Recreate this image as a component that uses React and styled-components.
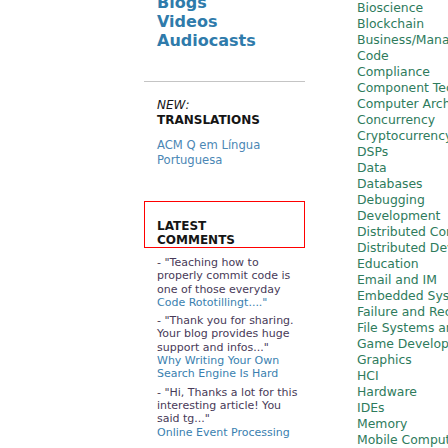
import React from 'react';
import styled, { createGlobalStyle } from 'styled-components';

const GlobalStyle = createGlobalStyle`
  body {
    margin: 0;
    background: #fff;
    font-family: "DejaVu Sans", Verdana, sans-serif;
    overflow: hidden;
  }
`;

const Page = styled.div`
  display: grid;
  grid-template-columns: 144px 161px 1fr;
  width: 448px;
  height: 448px;
  overflow: hidden;
`;

const Sidebar = styled.div`
  grid-column: 2;
  display: flex;
  flex-direction: column;
  white-space: nowrap;
`;

const NavList = styled.div`
  margin-top: -7px;
  padding-left: 13px;
  display: flex;
  flex-direction: column;
`;

const NavLink = styled.a`
  font-size: 16px;
  line-height: 19px;
  font-weight: bold;
  color: #2f7bab;
  text-decoration: none;
`;

const Rule = styled.div`
  margin-top: 31px;
  border-top: 1px solid #c4c4c4;
`;

const Block = styled.div`
  padding-left: 13px;
  margin-top: 16px;
`;

const Heading = styled.div`
  font-size: 12px;
  line-height: ${(p) => p.$lh || 15}px;
  font-weight: bold;
  color: #151515;
  em {
    font-weight: normal;
    font-style: italic;
  }
`;

const PlainLink = styled.a`
  display: block;
  margin-top: 10px;
  font-size: 11.6px;
  line-height: 15px;
  color: #4b87b5;
  text-decoration: none;
`;

const Highlight = styled.div`
  margin-top: 33px;
  border: 1px solid #ff0000;
  padding: 17px 0 0 12px;
`;

const Comments = styled.div`
  margin-top: 8px;
  padding-left: 13px;
  display: flex;
  flex-direction: column;
  gap: 5px;
`;

const Comment = styled.div`
  font-size: 11px;
  line-height: 13.3px;
  color: #483a58;
`;

const CommentLink = styled.a`
  display: block;
  color: #3a7fb0;
  text-decoration: none;
`;

const Topics = styled.div`
  grid-column: 3;
  padding-left: 52px;
  display: flex;
  flex-direction: column;
  white-space: nowrap;
  overflow: hidden;
`;

const Topic = styled.a`
  font-size: 12.4px;
  line-height: 16px;
  color: #2e7b5c;
  text-decoration: none;
`;

const topics = [
  'Bioscience',
  'Blockchain',
  'Business/Management',
  'Code',
  'Compliance',
  'Component Technologies',
  'Computer Architecture',
  'Concurrency',
  'Cryptocurrency',
  'DSPs',
  'Data',
  'Databases',
  'Debugging',
  'Development',
  'Distributed Computing',
  'Distributed Development',
  'Education',
  'Email and IM',
  'Embedded Systems',
  'Failure and Recovery',
  'File Systems and Storage',
  'Game Development',
  'Graphics',
  'HCI',
  'Hardware',
  'IDEs',
  'Memory',
  'Mobile Computing',
];

const comments = [
  {
    lines: ['- "Teaching how to', 'properly commit code is', 'one of those everyday'],
    link: ['Code Rototillingt...."'],
  },
  {
    lines: ['- "Thank you for sharing.', 'Your blog provides huge', 'support and infos..."'],
    link: ['Why Writing Your Own', 'Search Engine Is Hard'],
  },
  {
    lines: ['- "Hi, Thanks a lot for this', 'interesting article! You', 'said tg..."'],
    link: ['Online Event Processing'],
  },
];

export default function App() {
  return (
    <>
      <GlobalStyle />
      <Page>
        <Sidebar>
          <NavList>
            <NavLink href="#">Blogs</NavLink>
            <NavLink href="#">Videos</NavLink>
            <NavLink href="#">Audiocasts</NavLink>
          </NavList>
          <Rule />
          <Block>
            <Heading>
              <em>NEW:</em>
              <br />
              TRANSLATIONS
            </Heading>
            <PlainLink href="#">
              ACM Q em Língua
              <br />
              Portuguesa
            </PlainLink>
          </Block>
          <Highlight>
            <Heading $lh={14}>
              LATEST
              <br />
              COMMENTS
            </Heading>
          </Highlight>
          <Comments>
            {comments.map((c, i) => (
              <Comment key={i}>
                {c.lines.map((l, j) => (
                  <div key={j}>{l}</div>
                ))}
                <CommentLink href="#">
                  {c.link.map((l, j) => (
                    <div key={j}>{l}</div>
                  ))}
                </CommentLink>
              </Comment>
            ))}
          </Comments>
        </Sidebar>
        <Topics>
          {topics.map((t) => (
            <Topic key={t} href="#">
              {t}
            </Topic>
          ))}
        </Topics>
      </Page>
    </>
  );
}
